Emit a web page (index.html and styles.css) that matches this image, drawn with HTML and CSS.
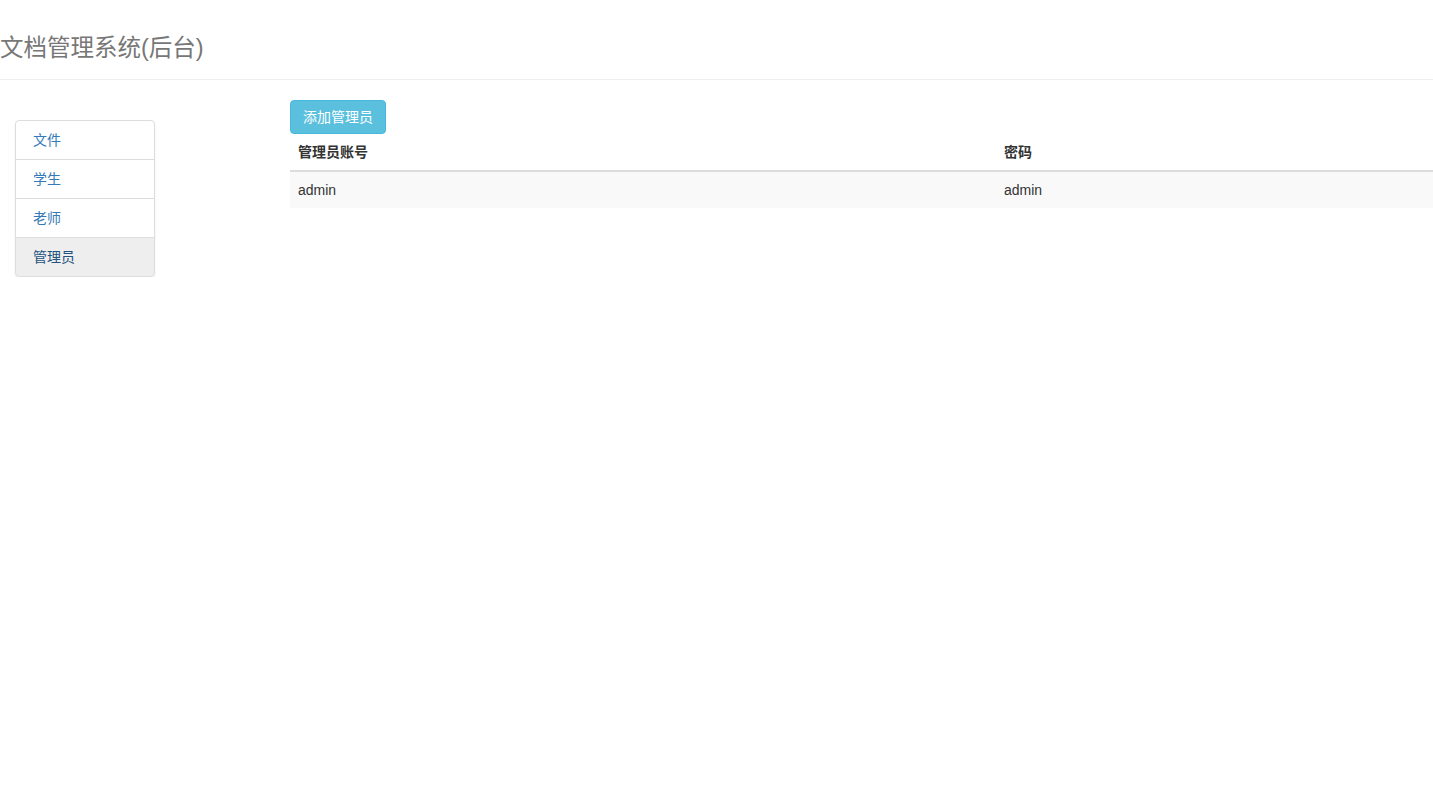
FILE: index.html
```html
<!DOCTYPE html>
<html lang="zh-CN">

<head>
    <meta charset="UTF-8" />
    <meta name="viewport" content="width=device-width, initial-scale=1.0" />
    <title>文档管理系统(后台)</title>
    <link rel="stylesheet" href="styles.css">
</head>

<body>
    <div class="header">
        <h2 class="brand">文档管理系统(后台)</h2>
    </div>
    <div class="layout">
        <div class="sidebar">
            <div class="list-group">
                <a href="#" class="list-group-item">文件</a>
                <a href="#" class="list-group-item">学生</a>
                <a href="#" class="list-group-item">老师</a>
                <a href="#" class="list-group-item active">管理员</a>
            </div>
        </div>
        <div class="main">
            <button type="button" class="btn-info">添加管理员</button>
            <table class="table">
                <thead>
                    <tr>
                        <th class="col-account">管理员账号</th>
                        <th>密码</th>
                    </tr>
                </thead>
                <tbody>
                    <tr>
                        <td>admin</td>
                        <td>admin</td>
                    </tr>
                </tbody>
            </table>
        </div>
    </div>
</body>

</html>
```

FILE: styles.css
```css
body {
    margin: 0;
    font-family: "Liberation Sans", Arial, "Noto Sans CJK SC", sans-serif;
    font-size: 14px;
    line-height: 20px;
    color: #333;
    background-color: #fff;
}

.header {
    height: 80px;
    border-bottom: 1px solid #eee;
    box-sizing: border-box;
}

.brand {
    margin: 0;
    padding-top: 35px;
    font-size: 23.5px;
    font-weight: normal;
    line-height: 26px;
    color: #777;
}

.layout {
    display: flex;
    padding-top: 20px;
}

.sidebar {
    width: 290px;
    flex-shrink: 0;
    padding-left: 15px;
    padding-top: 20px;
    box-sizing: border-box;
}

.list-group {
    width: 140px;
    border-radius: 4px;
    box-shadow: 0 1px 2px rgba(0, 0, 0, 0.075);
}

.list-group-item {
    display: block;
    padding: 9px 17px;
    border: 1px solid #ddd;
    margin-bottom: -1px;
    color: #337ab7;
    text-decoration: none;
    background-color: #fff;
}

.list-group-item:first-child {
    border-top-left-radius: 4px;
    border-top-right-radius: 4px;
}

.list-group-item:last-child {
    margin-bottom: 0;
    border-bottom-left-radius: 4px;
    border-bottom-right-radius: 4px;
}

.list-group-item.active {
    background-color: #eee;
    color: #23527c;
}

.main {
    flex: 1;
}

.btn-info {
    display: block;
    padding: 6px 12px;
    font-family: inherit;
    font-size: 14px;
    line-height: 20px;
    color: #fff;
    background-color: #5bc0de;
    border: 1px solid #46b8da;
    border-radius: 4px;
    cursor: pointer;
}

.table {
    width: 100%;
    border-collapse: collapse;
    border-spacing: 0;
}

.table th,
.table td {
    padding: 8px;
    text-align: left;
    vertical-align: top;
}

.table th {
    font-weight: bold;
    border-bottom: 2px solid #ddd;
    vertical-align: bottom;
}

.table td {
    border-top: 1px solid #ddd;
}

.table tbody tr:nth-child(odd) {
    background-color: #f9f9f9;
}

.col-account {
    width: 690px;
}
```
